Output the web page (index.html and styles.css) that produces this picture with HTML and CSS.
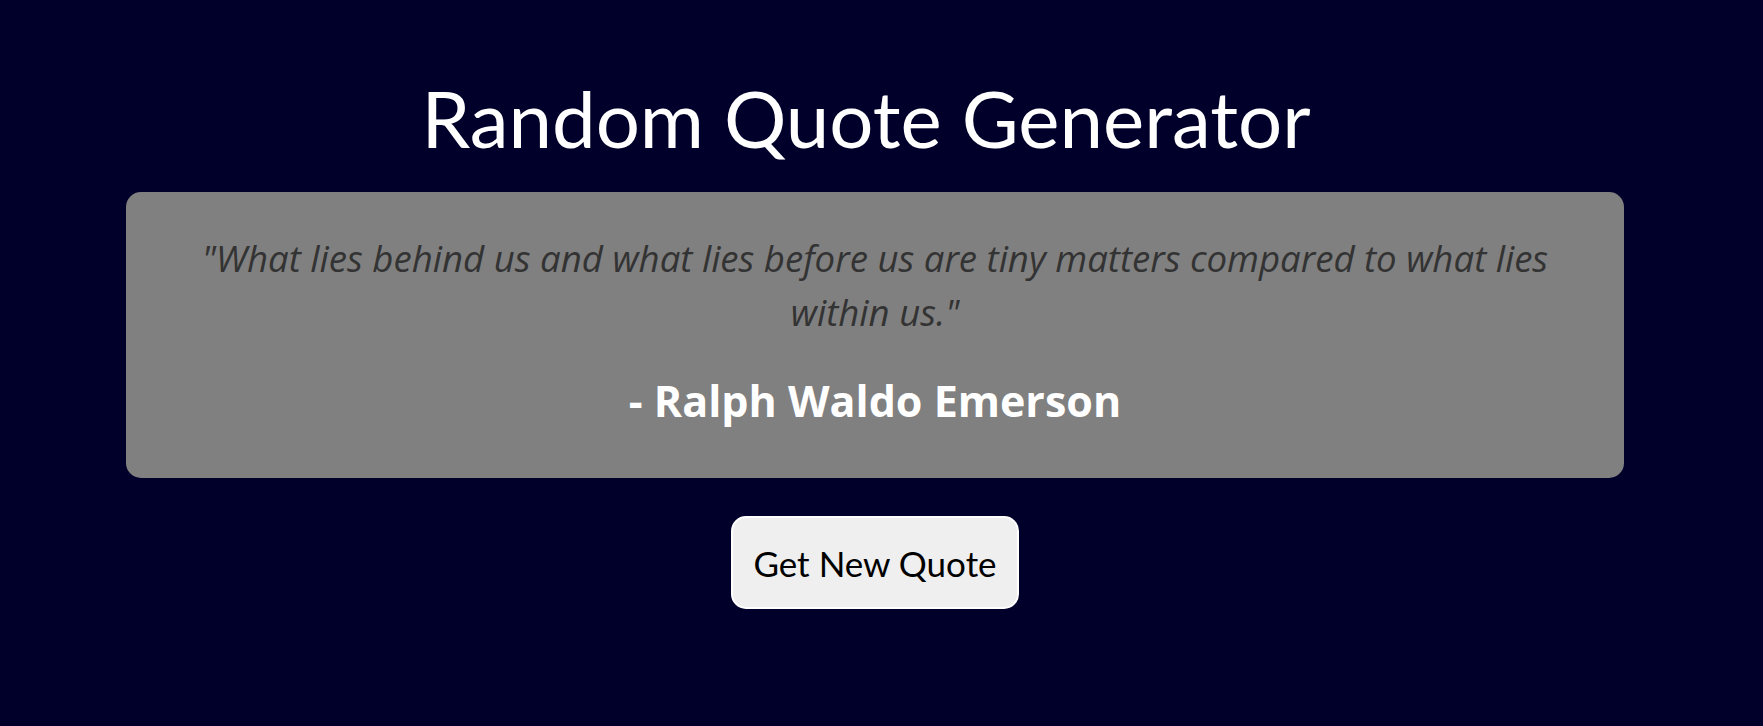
FILE: index.html
```html
<!DOCTYPE html>
<html lang="en">
<head>
<meta charset="utf-8">
<title>Random Quote Generator</title>
<link rel="stylesheet" href="styles.css">
</head>
<body>
<main class="page">
  <h1 class="title">Random Quote Generator</h1>
  <section class="card">
    <p class="quote">"What lies behind us and what lies before us are tiny matters compared to what lies within us."</p>
    <h2 class="author">- Ralph Waldo Emerson</h2>
  </section>
  <button class="new-quote" type="button">Get New Quote</button>
</main>
</body>
</html>
```
FILE: styles.css
```css
html, body {
  margin: 0;
  padding: 0;
}
body {
  background: #00002a;
  min-height: 100vh;
  font-family: "Open Sans", "Lato", sans-serif;
}
.page {
  display: flex;
  flex-direction: column;
  align-items: center;
  padding-right: 13px;
}
.title {
  margin: 70px 18px 0 0;
  font-family: "Comic Sans MS", "Lato", sans-serif;
  font-weight: normal;
  font-size: 78px;
  line-height: 96px;
  color: #fff;
}
.card {
  box-sizing: border-box;
  width: 1498px;
  margin-top: 26px;
  height: 286px;
  padding: 39px 60px 0;
  background: #808080;
  border-radius: 15px;
  text-align: center;
}
.quote {
  margin: 0;
  font-style: italic;
  font-weight: 400;
  font-size: 36.6px;
  line-height: 54px;
  color: #333;
}
.author {
  margin: 34px 0 0;
  font-weight: 700;
  font-size: 43px;
  line-height: 56px;
  color: #fff;
}
.new-quote {
  box-sizing: border-box;
  margin-top: 38px;
  width: 288px;
  height: 93px;
  background: #efefef;
  border: 2px solid #fff;
  border-radius: 15px;
  font-family: "Comic Sans MS", "Lato", sans-serif;
  font-size: 35px;
  color: #000;
  cursor: pointer;
}
```
